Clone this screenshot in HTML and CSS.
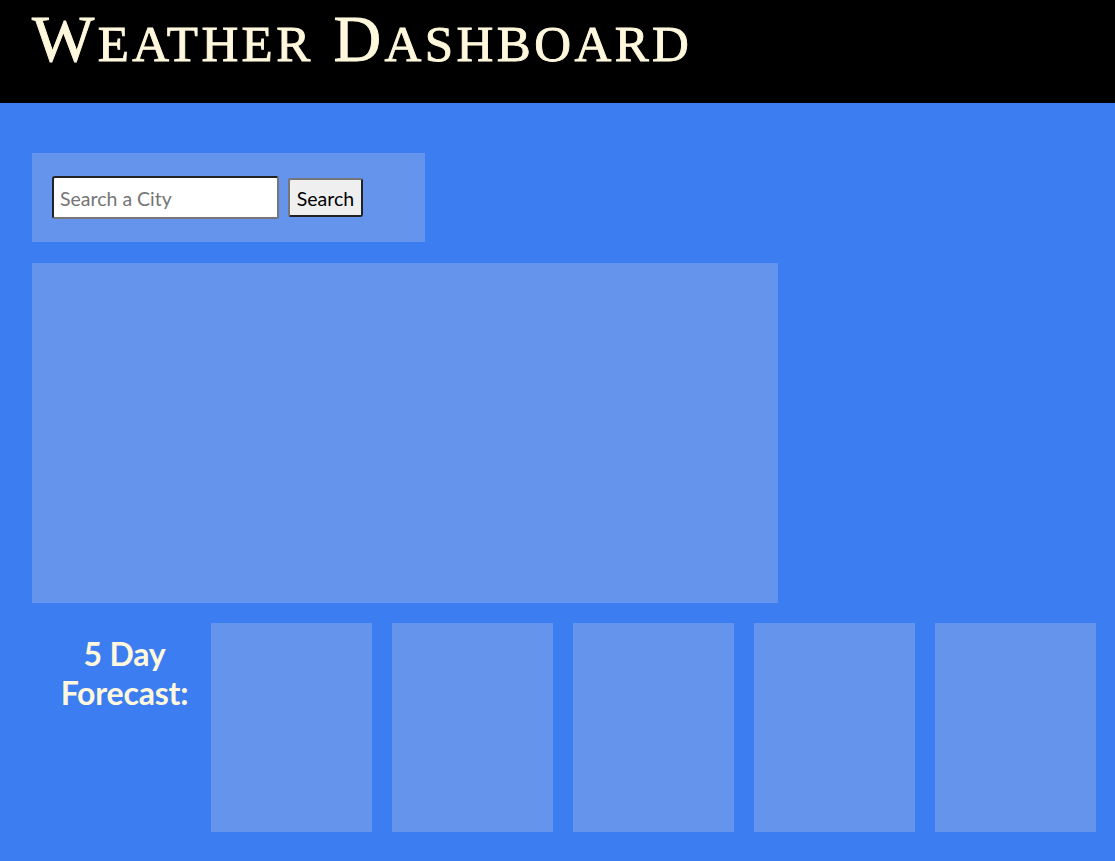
FILE: index.html
```html
<!DOCTYPE html>
<html lang="en">
<head>
<meta charset="utf-8">
<title>Weather Dashboard</title>
<link rel="stylesheet" href="styles.css">
</head>
<body>
<header class="top">
  <h1 class="title">W<span class="sc">eather</span> D<span class="sc">ashboard</span></h1>
</header>
<main class="page">
  <section class="search-box">
    <input class="search-input" type="text" placeholder="Search a City">
    <button class="search-btn" type="button">Search</button>
  </section>
  <section class="current"></section>
  <section class="forecast">
    <h2 class="forecast-label">5 Day Forecast:</h2>
    <div class="day"></div>
    <div class="day"></div>
    <div class="day"></div>
    <div class="day"></div>
    <div class="day"></div>
  </section>
</main>
</body>
</html>
```
FILE: styles.css
```css
html, body {
  margin: 0;
  padding: 0;
}
body {
  background: #3c7ef2;
  font-family: Lato, "Noto Sans", sans-serif;
  min-height: 861px;
}
.top {
  background: #000;
  height: 103px;
  box-sizing: border-box;
  padding: 0 32px;
}
.title {
  margin: 0;
  font-family: "Liberation Serif", "DejaVu Serif", serif;
  font-weight: normal;
  font-size: 66px;
  line-height: 78px;
  color: #fff8dc;
  -webkit-text-stroke: 0.9px #fff8dc;
  letter-spacing: 3.4px;
  white-space: nowrap;
}
.sc {
  font-size: 51px;
  text-transform: uppercase;
}
.page {
  padding: 50px 19px 29px 32px;
}
.search-box {
  background: #6494ec;
  width: 393px;
  height: 89px;
  box-sizing: border-box;
  padding: 23px 20px;
  display: flex;
  align-items: center;
  gap: 9px;
}
.search-input {
  width: 227px;
  height: 43px;
  box-sizing: border-box;
  margin: 0;
  border: 2px solid #222;
  border-right-color: #767676;
  border-bottom-color: #767676;
  border-radius: 3px;
  padding: 2px 6px 0;
  font-family: Lato, sans-serif;
  font-size: 19.5px;
  background: #fff;
}
.search-input::placeholder {
  color: #757575;
}
.search-btn {
  width: 75px;
  height: 39px;
  box-sizing: border-box;
  margin: 0;
  border: 2px solid #767676;
  border-right-color: #222;
  border-bottom-color: #222;
  border-radius: 3px;
  background: #efefef;
  color: #000;
  font-family: Lato, sans-serif;
  font-size: 19.5px;
  padding: 2px 0 0;
}
.current {
  background: #6494ec;
  width: 746px;
  height: 340px;
  margin-top: 21px;
}
.forecast {
  margin-top: 20px;
  display: flex;
  gap: 20px;
  height: 209px;
}
.forecast-label {
  margin: 0;
  width: 159px;
  box-sizing: border-box;
  padding: 11px 0 0 26px;
  text-align: center;
  color: #fff8dc;
  font-size: 32px;
  line-height: 39px;
  font-weight: bold;
  letter-spacing: -0.2px;
}
.day {
  background: #6494ec;
  width: 161px;
  height: 209px;
}
```
